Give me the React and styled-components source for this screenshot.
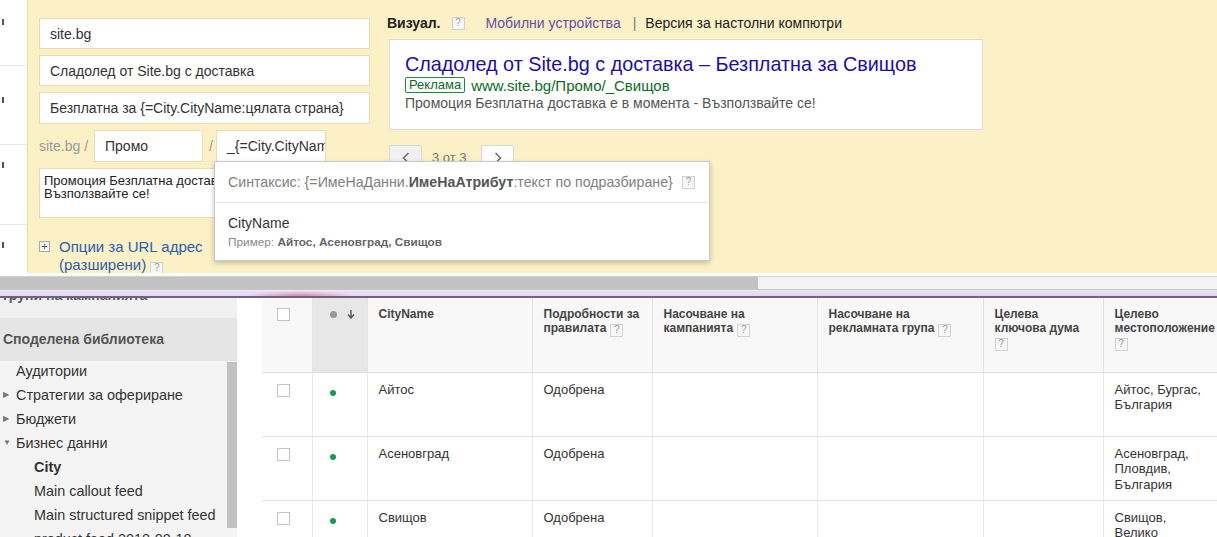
import React from 'react';
import styled, { createGlobalStyle } from 'styled-components';

const GlobalStyle = createGlobalStyle`
  html, body {
    margin: 0;
    padding: 0;
  }
  body {
    width: 1217px;
    height: 537px;
    overflow: hidden;
    background: #fff;
    color: #333;
    font-family: "Liberation Sans", Arial, sans-serif;
  }
  * { box-sizing: border-box; }
`;

const Page = styled.div`
  width: 1217px;
  height: 537px;
  overflow: hidden;
  display: flex;
  flex-direction: column;
`;

/* ---------- top: ad editor ---------- */

const Top = styled.div`
  position: relative;
  display: flex;
  height: 273px;
  flex-shrink: 0;
`;

const Strip = styled.div`
  width: 27px;
  display: flex;
  flex-direction: column;
  background: #fff;
`;

const StripRow = styled.div`
  height: ${(p) => p.$h}px;
  padding-top: ${(p) => p.$tick}px;
  border-bottom: ${(p) => (p.$last ? 'none' : '1px solid #e8e8e8')};
  flex-shrink: 0;
`;

const Tick = styled.span`
  display: block;
  margin-left: 2px;
  width: 2px;
  height: 6px;
  background: #555;
`;

const Editor = styled.div`
  flex: 1;
  display: flex;
  background: #fbf0c6;
  border-left: 1px solid #ebdfae;
  padding-left: 11px;
  overflow: hidden;
`;

const FormCol = styled.div`
  width: 331px;
  flex-shrink: 0;
  padding-top: 18px;
  display: flex;
  flex-direction: column;
  gap: 6px;
  & > * {
    flex-shrink: 0;
  }
`;

const Field = styled.div`
  height: ${(p) => p.$h || 31}px;
  width: ${(p) => (p.$w ? `${p.$w}px` : '100%')};
  flex-shrink: 0;
  background: #fff;
  border: 1px solid #e6dcb6;
  padding: 0 10px;
  display: flex;
  align-items: center;
  font-size: 14px;
  color: #333;
  white-space: nowrap;
  overflow: hidden;
`;

const PathRow = styled.div`
  display: flex;
  align-items: center;
  height: 32px;
  font-size: 14px;
  color: #999;
`;

const PathLabel = styled.span`
  width: 55px;
  flex-shrink: 0;
`;

const Slash = styled.span`
  width: 13px;
  padding-left: 6px;
  flex-shrink: 0;
`;

const TextArea = styled.div`
  height: 50px;
  background: #fff;
  border: 1px solid #e6dcb6;
  padding: 5px 4px;
  font-size: 13px;
  line-height: 13px;
  color: #222;
`;

const UrlOptions = styled.div`
  margin-top: 14px;
  display: flex;
  gap: 9px;
  width: 200px;
`;

const PlusBox = styled.span`
  margin-top: 3px;
  width: 11px;
  height: 11px;
  flex-shrink: 0;
  border: 1px solid #a8a8a8;
  background: #f4f4f4;
  display: flex;
  align-items: center;
  justify-content: center;
  color: #555;
  font-size: 11px;
  line-height: 9px;
`;

const LinkText = styled.span`
  font-size: 15px;
  line-height: 18px;
  color: #2b5ead;
`;

const Help = styled.span`
  display: inline-flex;
  align-items: center;
  justify-content: center;
  width: 13px;
  height: 13px;
  margin-left: ${(p) => p.$ml ?? 4}px;
  border: 1px solid #d2d2d2;
  background: #f7f7f7;
  color: #9a9a9a;
  font-size: 10px;
  line-height: 1;
  vertical-align: ${(p) => p.$va || '-1px'};
  font-weight: normal;
`;

const PreviewCol = styled.div`
  margin-left: 17px;
  padding-top: 14px;
  display: flex;
  flex-direction: column;
`;

const PreviewHead = styled.div`
  display: flex;
  align-items: center;
  height: 18px;
  font-size: 14px;
  color: #222;
`;

const Strong = styled.b`
  font-weight: bold;
`;

const DeviceLink = styled.span`
  margin-left: ${(p) => p.$ml}px;
  color: ${(p) => p.$color || '#222'};
`;

const AdBox = styled.div`
  margin-top: 7px;
  margin-left: 2px;
  width: 594px;
  height: 91px;
  background: #fff;
  border: 1px solid #dadada;
  padding: 13px 15px;
`;

const AdTitle = styled.div`
  font-size: 19.8px;
  line-height: 23px;
  color: #1d0ea6;
`;

const AdUrl = styled.div`
  display: flex;
  align-items: center;
  height: 18px;
  font-size: 15px;
  color: #0b6b23;
`;

const AdBadge = styled.span`
  border: 1px solid #1a8a3a;
  border-radius: 2px;
  padding: 0 3px;
  height: 16px;
  line-height: 14px;
  font-size: 13px;
  margin-right: 6px;
  color: #0b6b23;
`;

const AdDesc = styled.div`
  font-size: 14px;
  line-height: 18px;
  color: #545454;
`;

const Pager = styled.div`
  margin-top: 15px;
  margin-left: 2px;
  display: flex;
  align-items: center;
`;

const PageBtn = styled.span`
  width: 33px;
  height: 25px;
  border: 1px solid #d9d9d9;
  border-radius: 2px;
  background: ${(p) => (p.$disabled ? '#f1f1f1' : '#fff')};
  display: flex;
  align-items: center;
  justify-content: center;
`;

const PageText = styled.span`
  width: 59px;
  padding-left: 10px;
  font-size: 13px;
  color: #777;
`;

const Tooltip = styled.div`
  position: absolute;
  left: 214px;
  top: 161px;
  width: 496px;
  height: 100px;
  background: #fff;
  border: 1px solid #cacaca;
  box-shadow: 0 2px 5px rgba(0, 0, 0, 0.22);
  z-index: 2;
`;

const TipHead = styled.div`
  height: 41px;
  padding: 0 14px 0 13px;
  display: flex;
  align-items: center;
  justify-content: space-between;
  border-bottom: 1px solid #e6e6e6;
  font-size: 14.2px;
  color: #808080;
`;

const TipBold = styled.b`
  color: #555;
`;

const TipBody = styled.div`
  padding: 11px 13px 0;
`;

const TipName = styled.div`
  font-size: 14px;
  line-height: 18px;
  color: #333;
`;

const TipExample = styled.div`
  margin-top: 3px;
  font-size: 11.8px;
  line-height: 14px;
  color: #888;
  b {
    color: #666;
  }
`;

/* ---------- middle: scroll bar ---------- */

const WhiteGap = styled.div`
  height: 3px;
  background: #fff;
  flex-shrink: 0;
`;

const HScroll = styled.div`
  height: 14px;
  flex-shrink: 0;
  background: #f3f3f3;
  border-top: 1px solid #cfcfcf;
  border-bottom: 1px solid #cbcbcb;
`;

const HThumb = styled.div`
  width: 758px;
  height: 100%;
  background: #c2c2c2;
`;

const Band = styled.div`
  height: 8px;
  flex-shrink: 0;
  background: radial-gradient(ellipse 52px 5px at 300px 100%, rgba(214, 70, 96, 0.55), rgba(214, 70, 96, 0) 100%),
    linear-gradient(#ece2f7, #e4d6f5);
  border-bottom: 2px solid #6d6676;
`;

/* ---------- bottom: library + table ---------- */

const Bottom = styled.div`
  flex: 1;
  display: flex;
  overflow: hidden;
`;

const Sidebar = styled.div`
  width: 237px;
  flex-shrink: 0;
  background: #f3f3f3;
  overflow: hidden;
  display: flex;
  flex-direction: column;
  & > * {
    flex-shrink: 0;
  }
`;

const CutLabel = styled.div`
  margin-top: -13px;
  height: 33px;
  line-height: 20px;
  padding-left: 3px;
  font-size: 14px;
  font-weight: bold;
  color: #5a5a5a;
  background: #f1f1f1;
`;

const LibHeader = styled.div`
  height: 43px;
  line-height: 43px;
  padding-left: 3px;
  font-size: 14px;
  font-weight: bold;
  color: #555;
  background: #e5e5e5;
`;

const LibBody = styled.div`
  display: flex;
  background: #f4f4f4;
  height: 200px;
`;

const LibList = styled.div`
  flex: 1;
`;

const LibItem = styled.div`
  height: 24px;
  line-height: 20px;
  display: flex;
  font-size: 14.4px;
  color: #333;
  font-weight: ${(p) => (p.$bold ? 'bold' : 'normal')};
  padding-left: ${(p) => (p.$child ? 34 : 3)}px;
  white-space: nowrap;
`;

const Arrow = styled.span`
  width: 13px;
  font-size: 8px;
  color: #777;
`;

const VScroll = styled.div`
  width: 10px;
  margin-top: 1px;
  height: 166px;
  background: #c2c2c2;
`;

const Gutter = styled.div`
  width: 25px;
  flex-shrink: 0;
  background: #fff;
`;

const TableWrap = styled.div`
  flex: 1;
  overflow: hidden;
`;

const Table = styled.table`
  table-layout: fixed;
  border-collapse: collapse;
  width: 961px;
`;

const Th = styled.th`
  height: 74px;
  padding: 9px 11px 0;
  vertical-align: top;
  text-align: left;
  font-size: 12px;
  line-height: 14px;
  font-weight: bold;
  color: #444;
  background: ${(p) => (p.$sorted ? '#e7e7e7' : '#f8f8f8')};
  border-left: 1px solid #e3e3e3;
  border-bottom: 1px solid #e0e0e0;
  &:first-child {
    border-left: none;
  }
`;

const Td = styled.td`
  height: 64px;
  padding: 9px 11px 0;
  vertical-align: top;
  font-size: 13px;
  line-height: 15.5px;
  color: #333;
  border-left: 1px solid #e8e8e8;
  border-bottom: 1px solid #e4e4e4;
  &:first-child {
    border-left: none;
  }
`;

const CheckBox = styled.span`
  display: block;
  margin: ${(p) => (p.$head ? '1px' : '2px')} 0 0 4px;
  width: 13px;
  height: 13px;
  border: 1px solid #c4c4c4;
  background: #fff;
`;

const StatusHead = styled.div`
  display: flex;
  align-items: center;
  gap: 10px;
  padding: 3px 0 0 6px;
`;

const Dot = styled.span`
  display: block;
  width: ${(p) => p.$size}px;
  height: ${(p) => p.$size}px;
  border-radius: 50%;
  background: ${(p) => p.$color};
  margin: ${(p) => p.$m || 0};
`;

const HelpIcon = ({ ml, va }) => <Help $ml={ml} $va={va}>?</Help>;

const Chevron = ({ dir }) => (
  <svg width="8" height="12" viewBox="0 0 8 12">
    <polyline
      points={dir === 'left' ? '6.5,1 1.5,6 6.5,11' : '1.5,1 6.5,6 1.5,11'}
      fill="none"
      stroke="#6f6f6f"
      strokeWidth="1.6"
    />
  </svg>
);

const SortArrow = () => (
  <svg width="8" height="9" viewBox="0 0 8 9">
    <path d="M4 0v7M1 4.5L4 8l3-3.5" fill="none" stroke="#555" strokeWidth="1.4" />
  </svg>
);

const columns = [
  { w: 50 },
  { w: 55, sorted: true },
  { w: 165, label: 'CityName' },
  { w: 120, label: ['Подробности за', 'правилата'], help: true },
  { w: 165, label: ['Насочване на', 'кампанията'], help: true },
  { w: 166, label: ['Насочване на', 'рекламната група'], help: true },
  { w: 120, label: ['Целева', 'ключова дума', ''], help: true },
  { w: 120, label: ['Целево', 'местоположение', ''], help: true },
];

const rows = [
  { city: 'Айтос', status: 'Одобрена', location: ['Айтос, Бургас,', 'България'] },
  { city: 'Асеновград', status: 'Одобрена', location: ['Асеновград,', 'Пловдив,', 'България'] },
  { city: 'Свищов', status: 'Одобрена', location: ['Свищов,', 'Велико', 'Търново,'] },
];

const library = [
  { text: 'Аудитории' },
  { text: 'Стратегии за офериране', arrow: '▶' },
  { text: 'Бюджети', arrow: '▶' },
  { text: 'Бизнес данни', arrow: '▼' },
  { text: 'City', child: true, bold: true },
  { text: 'Main callout feed', child: true },
  { text: 'Main structured snippet feed', child: true },
  { text: 'product feed 2018-08-18', child: true },
];

const HeaderLabel = ({ col }) => {
  if (!col.label) return null;
  if (typeof col.label === 'string') return col.label;
  const lines = col.label;
  return lines.map((line, i) => (
    <React.Fragment key={i}>
      {line}
      {i === lines.length - 1 && col.help && <HelpIcon ml={line ? 4 : 0} />}
      {i < lines.length - 1 && <br />}
    </React.Fragment>
  ));
};

export default function App() {
  return (
    <Page>
      <GlobalStyle />
      <Top>
        <Strip>
          <StripRow $h={66} $tick={19}><Tick /></StripRow>
          <StripRow $h={79} $tick={31}><Tick /></StripRow>
          <StripRow $h={80} $tick={17}><Tick /></StripRow>
          <StripRow $h={48} $tick={17} $last><Tick /></StripRow>
        </Strip>

        <Editor>
          <FormCol>
            <Field>site.bg</Field>
            <Field>Сладолед от Site.bg с доставка</Field>
            <Field $h={32}>Безплатна за {'{'}=City.CityName:цялата страна{'}'}</Field>
            <PathRow>
              <PathLabel>site.bg /</PathLabel>
              <Field $h={32} $w={109}>Промо</Field>
              <Slash>/</Slash>
              <Field $h={32} $w={110}>_{'{'}=City.CityName:</Field>
            </PathRow>
            <TextArea>
              Промоция Безплатна доставка е в момента -
              <br />
              Възползвайте се!
            </TextArea>
            <UrlOptions>
              <PlusBox>+</PlusBox>
              <LinkText>
                Опции за URL адрес (разширени)
                <HelpIcon ml={4} va="-1px" />
              </LinkText>
            </UrlOptions>
          </FormCol>

          <PreviewCol>
            <PreviewHead>
              <Strong>Визуал.</Strong>
              <HelpIcon ml={11} va="0" />
              <DeviceLink $ml={21} $color="#6b4c9e">Мобилни устройства</DeviceLink>
              <DeviceLink $ml={12} $color="#777">|</DeviceLink>
              <DeviceLink $ml={9}>Версия за настолни компютри</DeviceLink>
            </PreviewHead>
            <AdBox>
              <AdTitle>Сладолед от Site.bg с доставка – Безплатна за Свищов</AdTitle>
              <AdUrl>
                <AdBadge>Реклама</AdBadge>
                www.site.bg/Промо/_Свищов
              </AdUrl>
              <AdDesc>Промоция Безплатна доставка е в момента - Възползвайте се!</AdDesc>
            </AdBox>
            <Pager>
              <PageBtn $disabled><Chevron dir="left" /></PageBtn>
              <PageText>3 от 3</PageText>
              <PageBtn><Chevron dir="right" /></PageBtn>
            </Pager>
          </PreviewCol>
        </Editor>

        <Tooltip>
          <TipHead>
            <span>
              Синтаксис: {'{'}=ИмеНаДанни.<TipBold>ИмеНаАтрибут</TipBold>:текст по подразбиране{'}'}
            </span>
            <HelpIcon ml={0} va="0" />
          </TipHead>
          <TipBody>
            <TipName>CityName</TipName>
            <TipExample>
              Пример: <b>Айтос, Асеновград, Свищов</b>
            </TipExample>
          </TipBody>
        </Tooltip>
      </Top>

      <WhiteGap />
      <HScroll>
        <HThumb />
      </HScroll>
      <Band />

      <Bottom>
        <Sidebar>
          <CutLabel>групи на кампанията</CutLabel>
          <LibHeader>Споделена библиотека</LibHeader>
          <LibBody>
            <LibList>
              {library.map((item) => (
                <LibItem key={item.text} $child={item.child} $bold={item.bold}>
                  {!item.child && <Arrow>{item.arrow || ''}</Arrow>}
                  {item.text}
                </LibItem>
              ))}
            </LibList>
            <VScroll />
          </LibBody>
        </Sidebar>

        <Gutter />

        <TableWrap>
          <Table>
            <colgroup>
              {columns.map((c, i) => (
                <col key={i} style={{ width: c.w }} />
              ))}
            </colgroup>
            <thead>
              <tr>
                <Th><CheckBox $head /></Th>
                <Th $sorted>
                  <StatusHead>
                    <Dot $size={7} $color="#9a9a9a" />
                    <SortArrow />
                  </StatusHead>
                </Th>
                {columns.slice(2).map((c, i) => (
                  <Th key={i}><HeaderLabel col={c} /></Th>
                ))}
              </tr>
            </thead>
            <tbody>
              {rows.map((r) => (
                <tr key={r.city}>
                  <Td><CheckBox /></Td>
                  <Td><Dot $size={6} $color="#149a5a" $m="8px 0 0 6px" /></Td>
                  <Td>{r.city}</Td>
                  <Td>{r.status}</Td>
                  <Td />
                  <Td />
                  <Td />
                  <Td>
                    {r.location.map((l, i) => (
                      <React.Fragment key={i}>
                        {l}
                        {i < r.location.length - 1 && <br />}
                      </React.Fragment>
                    ))}
                  </Td>
                </tr>
              ))}
            </tbody>
          </Table>
        </TableWrap>
      </Bottom>
    </Page>
  );
}
